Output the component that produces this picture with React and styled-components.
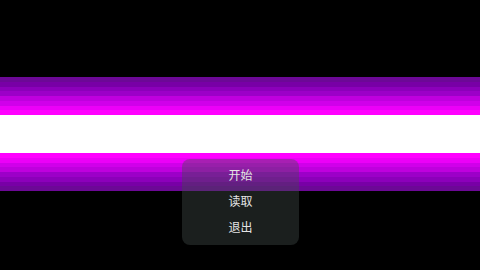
import React from "react";
import styled, { createGlobalStyle } from "styled-components";

const GlobalStyle = createGlobalStyle`
  html, body {
    margin: 0;
    padding: 0;
    background: #000;
  }
  #root {
    width: 480px;
    height: 270px;
  }
`;

const topColors = [
  "#6c0896",
  "#7800a6",
  "#8c00ba",
  "#9c00c8",
  "#bf00de",
  "#d000ea",
  "#ec00f8",
  "#ff00ff",
];

const Screen = styled.div`
  position: relative;
  width: 480px;
  height: 270px;
  background: #000;
  display: flex;
  flex-direction: column;
  padding-top: 77px;
  box-sizing: border-box;
  overflow: hidden;
`;

const Stripes = styled.div`
  height: 38px;
  display: flex;
  flex-direction: ${(p) => (p.$flip ? "column-reverse" : "column")};
`;

const Band = styled.div`
  flex: 1;
  background: ${(p) => p.$color};
`;

const WhiteBand = styled.div`
  height: 38px;
  background: #ffffff;
`;

const Menu = styled.div`
  position: absolute;
  left: 182px;
  top: 159px;
  width: 117px;
  height: 86px;
  box-sizing: border-box;
  padding: 2px 0 6px;
  border-radius: 8px;
  background: rgba(68, 78, 74, 0.4);
  display: flex;
  flex-direction: column;
`;

const MenuItem = styled.div`
  height: 26.5px;
  display: flex;
  align-items: center;
  justify-content: center;
  color: #e4e4e4;
  font-family: "Noto Sans CJK SC", "Noto Sans", sans-serif;
  font-size: 12px;
  cursor: pointer;
`;

const App = () => {
  const stripes = (flip) => (
    <Stripes $flip={flip}>
      {topColors.map((c, i) => (
        <Band key={i} $color={c} />
      ))}
    </Stripes>
  );

  return (
    <>
      <GlobalStyle />
      <Screen>
        {stripes(false)}
        <WhiteBand />
        {stripes(true)}
        <Menu>
          <MenuItem>开始</MenuItem>
          <MenuItem>读取</MenuItem>
          <MenuItem>退出</MenuItem>
        </Menu>
      </Screen>
    </>
  );
};

export default App;
